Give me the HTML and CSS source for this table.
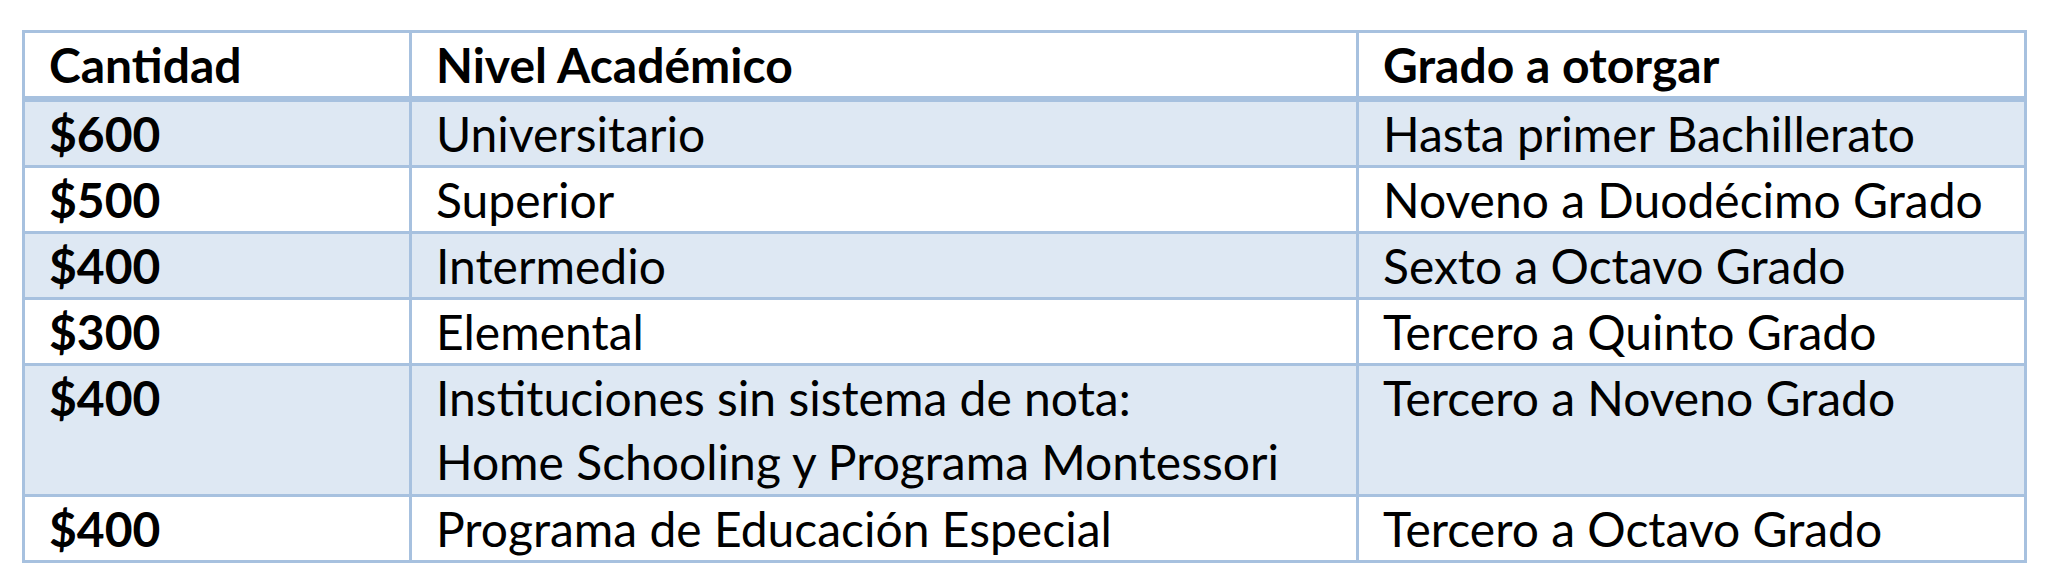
FILE: index.html
```html
<!DOCTYPE html>
<html lang="es">
<head>
<meta charset="utf-8">
<title>Becas</title>
<link rel="stylesheet" href="styles.css">
</head>
<body>
<table class="grid">
  <thead>
    <tr class="head">
      <th class="c1">Cantidad</th>
      <th class="c2">Nivel Académico</th>
      <th class="c3">Grado a otorgar</th>
    </tr>
  </thead>
  <tbody>
    <tr class="band">
      <td class="amt">$600</td>
      <td>Universitario</td>
      <td>Hasta primer Bachillerato</td>
    </tr>
    <tr>
      <td class="amt">$500</td>
      <td>Superior</td>
      <td>Noveno a Duodécimo Grado</td>
    </tr>
    <tr class="band">
      <td class="amt">$400</td>
      <td>Intermedio</td>
      <td>Sexto a Octavo Grado</td>
    </tr>
    <tr>
      <td class="amt">$300</td>
      <td>Elemental</td>
      <td>Tercero a Quinto Grado</td>
    </tr>
    <tr class="band tall">
      <td class="amt">$400</td>
      <td>Instituciones sin sistema de nota:<br>Home Schooling y Programa Montessori</td>
      <td>Tercero a Noveno Grado</td>
    </tr>
    <tr class="last">
      <td class="amt">$400</td>
      <td>Programa de Educación Especial</td>
      <td>Tercero a Octavo Grado</td>
    </tr>
  </tbody>
</table>
</body>
</html>
```

FILE: styles.css
```css
html, body {
  margin: 0;
  background: #ffffff;
}
body {
  padding: 30px 0 0 22px;
  font-family: "Lato", "Open Sans", sans-serif;
  color: #000;
}
.grid {
  border-collapse: separate;
  border-spacing: 0;
  table-layout: fixed;
  width: 2005px;
  border-top: 3px solid #a7c1df;
  border-left: 3px solid #a7c1df;
  font-size: 48px;
  line-height: 63px;
}
.grid th,
.grid td {
  box-sizing: border-box;
  border-right: 3px solid #a7c1df;
  border-bottom: 3px solid #a7c1df;
  padding: 0 0 0 24px;
  vertical-align: top;
  text-align: left;
  height: 66px;
  white-space: nowrap;
}
.grid th {
  font-weight: 700;
  height: 68px;
  border-bottom-width: 6px;
}
.c1 { width: 387px; }
.c2 { width: 947px; }
.c3 { width: 668px; }
.amt { font-weight: 700; }
.band td { background: #dee8f3; }
.tall td { height: 128px; line-height: 64px; }
.last td { height: 65px; }
```
